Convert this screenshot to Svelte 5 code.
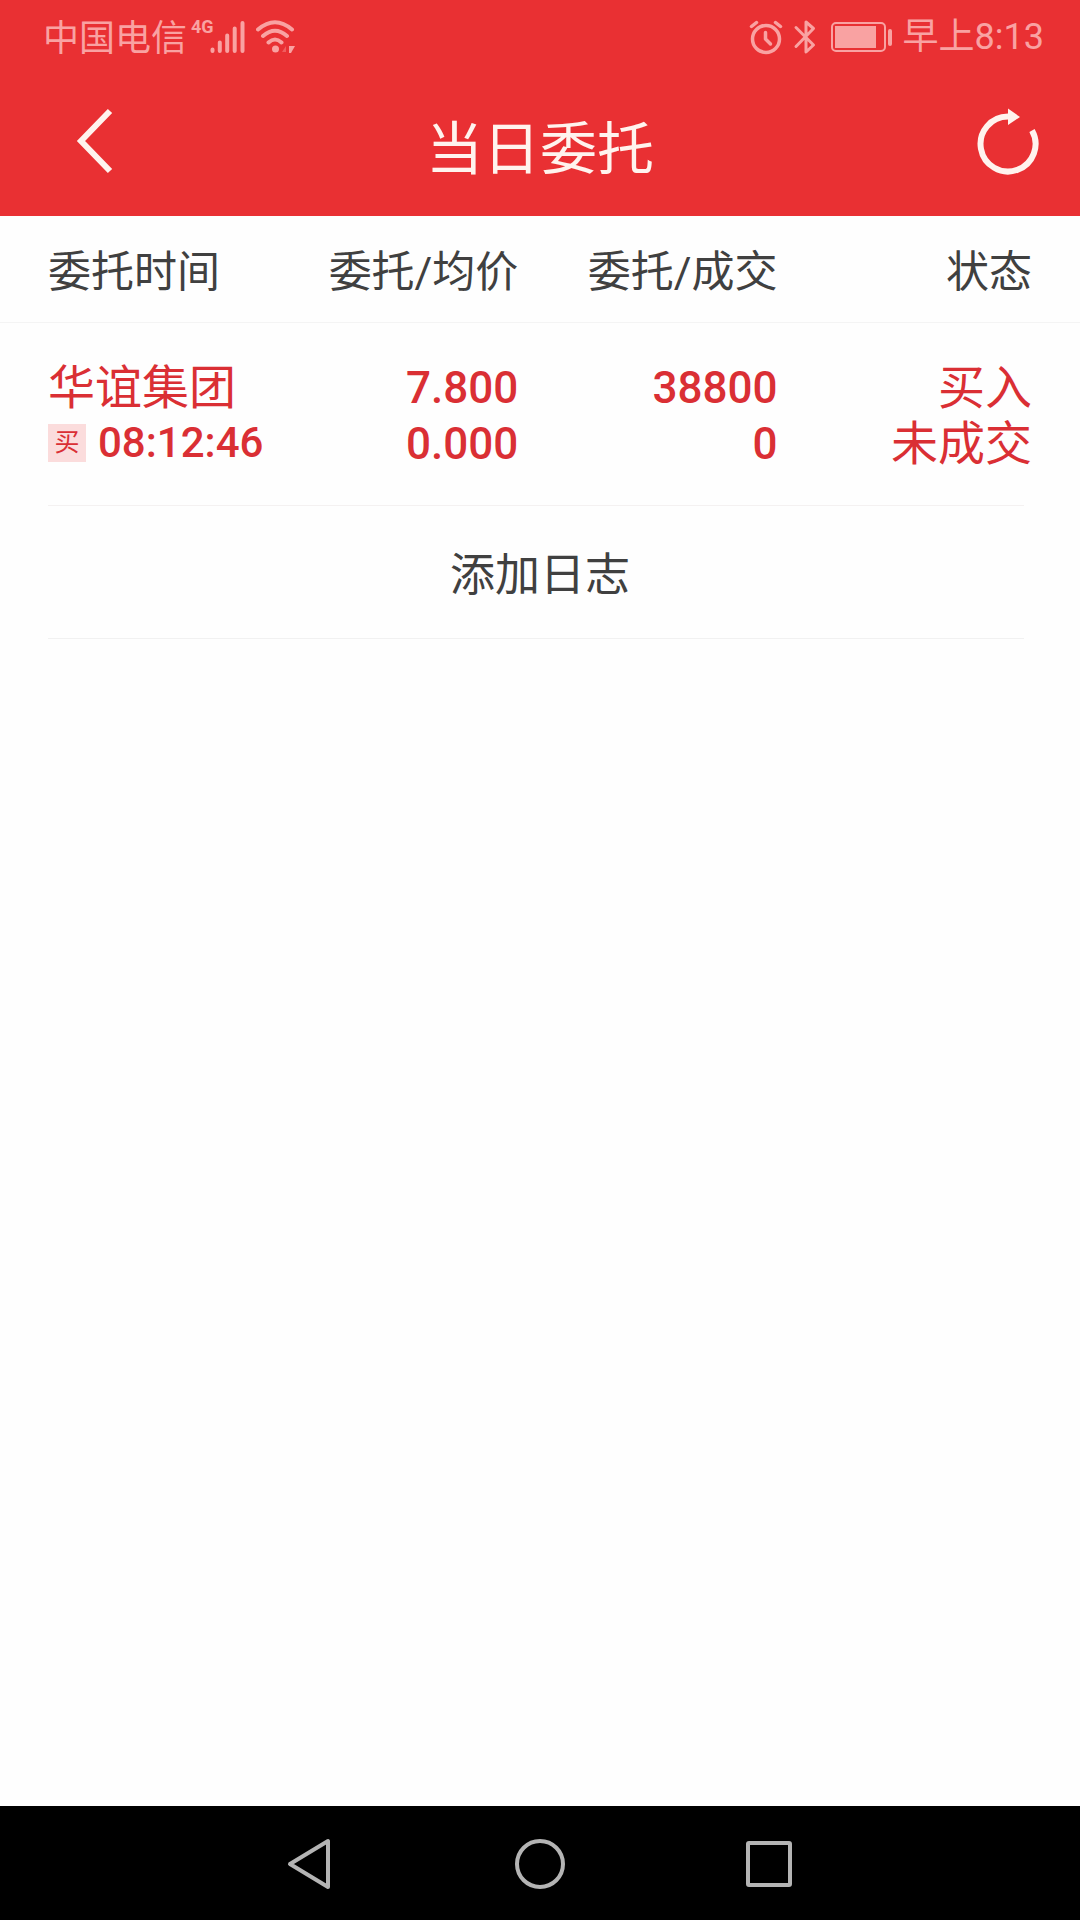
<script lang="ts">
  interface Order {
    name: string;
    side: string;
    time: string;
    price: string;
    avgPrice: string;
    amount: string;
    filled: string;
    action: string;
    status: string;
  }

  const columns = ["委托时间", "委托/均价", "委托/成交", "状态"];

  let orders = $state<Order[]>([
    {
      name: "华谊集团",
      side: "买",
      time: "08:12:46",
      price: "7.800",
      avgPrice: "0.000",
      amount: "38800",
      filled: "0",
      action: "买入",
      status: "未成交",
    },
  ]);
</script>

<div class="screen">
  <header class="top">
    <div class="status-bar">
      <div class="network">
        <span class="carrier">中国电信</span>
        <span class="generation">4G</span>
        <svg class="signal" width="36" height="34" viewBox="0 0 36 34" aria-hidden="true">
          <path d="M2.5 29.5V31M9.8 22.5V31M17.2 15.5V31M24.7 8.5V31M32.5 3V31" />
        </svg>
        <svg class="wifi" width="42" height="34" viewBox="0 0 42 34" aria-hidden="true">
          <path d="M2 9.5Q19 -5 36 9.5M7 16Q19 5.5 31 16M12.5 22.5Q19 16.5 25.5 22.5" />
          <circle cx="19.5" cy="29" r="3.5" />
          <path class="arrow" d="M33 26h6l-4 7h-2z" />
          <path class="arrow faint" d="M30 26v6h-4z" />
        </svg>
      </div>
      <div class="device">
        <svg width="34" height="36" viewBox="0 0 34 36" aria-hidden="true">
          <g
            fill="none"
            stroke="currentColor"
            stroke-width="3.5"
            stroke-linecap="round"
            stroke-linejoin="round"
          >
            <circle cx="17" cy="20" r="13.5" />
            <path d="M16.5 13.5V20l5 5" />
            <path d="M2.5 7.5l5-4M31.5 7.5l-5-4" />
          </g>
        </svg>
        <svg width="24" height="36" viewBox="0 0 24 36" aria-hidden="true">
          <path
            d="M3 8.5l17.5 17.5L13 33V3l7.5 6.500L3 27.5"
            fill="none"
            stroke="currentColor"
            stroke-width="3"
            stroke-linecap="round"
            stroke-linejoin="round"
          />
        </svg>
        <svg class="battery" width="62" height="30" viewBox="0 0 62 30" aria-hidden="true">
          <rect x="1" y="1" width="53" height="28" rx="4" fill="none" stroke="currentColor" stroke-width="2" />
          <rect x="4" y="4" width="41" height="22" fill="currentColor" />
          <rect x="57" y="7" width="4" height="17" rx="2" fill="currentColor" />
        </svg>
        <time>早上8:13</time>
      </div>
    </div>

    <div class="title-bar">
      <button type="button" class="back" aria-label="返回">
        <svg width="40" height="68" viewBox="0 0 40 68">
          <path d="M36 4L7 34l29 30" fill="none" stroke="currentColor" stroke-width="6" />
        </svg>
      </button>
      <h1>当日委托</h1>
      <button type="button" class="refresh" aria-label="刷新">
        <svg width="64" height="72" viewBox="0 0 64 72">
          <path
            d="M32 11.5A27.5 27.5 0 1 0 56 25.5"
            fill="none"
            stroke="currentColor"
            stroke-width="6"
          />
          <path d="M32 3.5l12 8.5L32 20z" fill="currentColor" />
        </svg>
      </button>
    </div>
  </header>

  <main>
    <table>
      <thead>
        <tr>
          {#each columns as column}
            <th scope="col">{column}</th>
          {/each}
        </tr>
      </thead>
      <tbody>
        {#each orders as order}
          <tr>
            <td>
              <div class="line">{order.name}</div>
              <div class="line time">
                <span class="side">{order.side}</span>
                <span>{order.time}</span>
              </div>
            </td>
            <td class="number">
              <div class="line">{order.price}</div>
              <div class="line">{order.avgPrice}</div>
            </td>
            <td class="number">
              <div class="line">{order.amount}</div>
              <div class="line">{order.filled}</div>
            </td>
            <td>
              <div class="line">{order.action}</div>
              <div class="line">{order.status}</div>
            </td>
          </tr>
        {/each}
      </tbody>
    </table>

    <button type="button" class="add-log">添加日志</button>
  </main>

  <nav>
    <button type="button" aria-label="返回">
      <svg width="50" height="54" viewBox="0 0 50 54">
        <path d="M43 5v46L5 28z" />
      </svg>
    </button>
    <button type="button" aria-label="主屏幕">
      <svg width="50" height="54" viewBox="0 0 50 54">
        <circle cx="25" cy="28" r="23" />
      </svg>
    </button>
    <button type="button" aria-label="最近任务">
      <svg width="50" height="54" viewBox="0 0 50 54">
        <rect x="3" y="7" width="42" height="42" rx="1" />
      </svg>
    </button>
  </nav>
</div>

<style>
  :global(body) {
    margin: 0;
  }

  .screen {
    min-height: 100vh;
    display: flex;
    flex-direction: column;
    background: #fefefe;
    color: #404040;
    font-family: Roboto, "Noto Sans CJK SC", sans-serif;
  }

  button {
    padding: 0;
    border: 0;
    background: none;
    color: inherit;
    font: inherit;
    cursor: pointer;
  }

  svg {
    display: block;
    flex: none;
  }

  .top {
    background: #e93033;
    color: #fff3ee;
  }

  .status-bar {
    display: flex;
    justify-content: space-between;
    align-items: center;
    height: 74px;
    padding: 0 36px 0 43px;
    color: #f9a2a2;
    font-size: 36px;
    line-height: 40px;
  }

  .network,
  .device {
    display: flex;
    align-items: center;
  }

  .carrier {
    padding-top: 4px;
  }

  .generation {
    align-self: flex-start;
    margin-left: 4px;
    padding-top: 2px;
    font-size: 18px;
    font-weight: 700;
    line-height: 20px;
  }

  .signal {
    margin: 0 10px 0 -4px;
    fill: none;
    stroke: currentColor;
    stroke-width: 4;
    stroke-linecap: round;
  }

  .wifi {
    fill: currentColor;
  }

  .wifi path {
    fill: none;
    stroke: currentColor;
    stroke-width: 4;
    stroke-linecap: round;
  }

  .wifi .arrow {
    fill: currentColor;
    stroke: none;
  }

  .wifi .faint {
    opacity: 0.4;
  }

  .device {
    gap: 10px;
  }

  .battery {
    margin-left: 4px;
  }

  .title-bar {
    display: grid;
    grid-template-columns: 1fr auto 1fr;
    align-items: center;
    height: 142px;
    padding: 0 40px 8px 74px;
    box-sizing: border-box;
  }

  .back {
    justify-self: start;
  }

  .refresh {
    justify-self: end;
  }

  h1 {
    margin: 0;
    padding: 18px 34px 0 0;
    font-size: 57px;
    font-weight: 400;
    line-height: 64px;
  }

  main {
    flex: 1;
  }

  table {
    width: 100%;
    border-collapse: collapse;
    table-layout: fixed;
  }

  th,
  td {
    box-sizing: border-box;
    padding: 0;
    text-align: right;
  }

  th {
    height: 106px;
    padding-top: 6px;
    border-bottom: 1px solid #f4f4f4;
    font-size: 43px;
    font-weight: 400;
    line-height: 48px;
  }

  th:nth-child(-n + 3) {
    width: 24%;
  }

  th:first-child,
  td:first-child {
    padding-left: 48px;
    text-align: left;
  }

  th:last-child,
  td:last-child {
    padding-right: 48px;
  }

  td {
    padding: 36px 0 34px;
    color: #da2f34;
    font-size: 47px;
    white-space: nowrap;
  }

  .line {
    height: 56px;
    line-height: 58px;
  }

  .number {
    font-size: 44px;
    font-weight: 500;
  }

  .time {
    display: flex;
    align-items: center;
    gap: 12px;
    font-size: 42px;
    font-weight: 500;
  }

  .side {
    flex: none;
    width: 38px;
    height: 38px;
    background: #fbdcdc;
    font-size: 25px;
    font-weight: 400;
    line-height: 38px;
    text-align: center;
  }

  .add-log {
    display: block;
    width: calc(100% - 104px);
    height: 134px;
    margin: 0 56px 0 48px;
    padding-left: 8px;
    border-top: 1px solid #f4f1f1;
    border-bottom: 1px solid #f1f1f1;
    font-size: 45px;
  }

  nav {
    display: grid;
    grid-template-columns: repeat(3, 1fr);
    justify-items: center;
    align-items: center;
    height: 114px;
    padding: 0 18%;
    background: #000;
  }

  nav svg {
    fill: none;
    stroke: #b4b4b4;
    stroke-width: 4;
    stroke-linejoin: round;
  }
</style>
